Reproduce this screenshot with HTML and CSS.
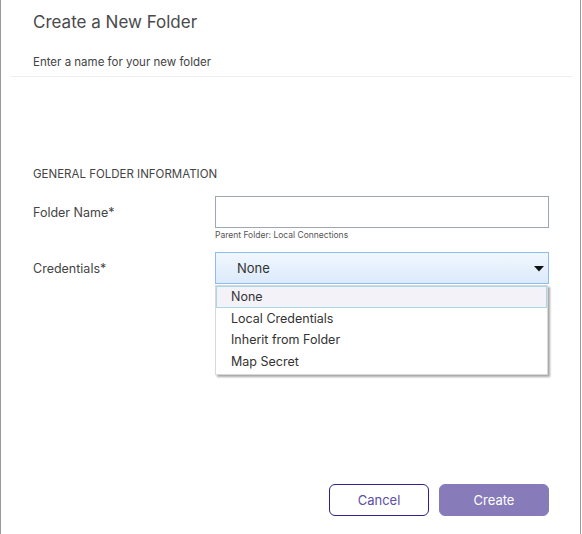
FILE: index.html
```html
<!DOCTYPE html>
<html>
<head>
<meta charset="utf-8">
<link rel="stylesheet" href="styles.css">
</head>
<body>
<div class="dialog">
  <div class="header">
    <h1 class="title">Create a New Folder</h1>
    <p class="subtitle">Enter a name for your new folder</p>
  </div>
  <div class="divider"></div>
  <div class="body">
    <h2 class="section">GENERAL FOLDER INFORMATION</h2>
    <div class="row">
      <label class="label">Folder Name*</label>
      <div class="field">
        <div class="input"></div>
        <div class="hint">Parent Folder: Local Connections</div>
      </div>
    </div>
    <div class="row row-cred">
      <label class="label">Credentials*</label>
      <div class="field">
        <div class="select">
          <span class="select-value">None</span>
          <svg class="caret" width="10" height="6" viewBox="0 0 10 6"><path d="M0 0 L10 0 L5 5.5 Z" fill="#111"/></svg>
        </div>
        <ul class="menu">
          <li class="item active">None</li>
          <li class="item">Local Credentials</li>
          <li class="item">Inherit from Folder</li>
          <li class="item">Map Secret</li>
        </ul>
      </div>
    </div>
  </div>
  <div class="footer">
    <button class="btn btn-cancel">Cancel</button>
    <button class="btn btn-create">Create</button>
  </div>
</div>
</body>
</html>
```
FILE: styles.css
```css
* { box-sizing: border-box; }
html, body { margin: 0; padding: 0; background: #fff; }
body {
  font-family: "Inter", "Lato", "Liberation Sans", sans-serif;
  color: #444;
}
.dialog {
  width: 581px;
  height: 534px;
  border-left: 1px solid #9a9a9a;
  border-right: 1px solid #9a9a9a;
  display: flex;
  flex-direction: column;
  background: #fff;
}
.header { padding: 10px 0 0 32px; }
.title {
  margin: 0;
  font-size: 17px;
  line-height: 24px;
  font-weight: 400;
  color: #4a4a4a;
}
.subtitle {
  margin: 20px 0 0 0;
  font-size: 11.5px;
  line-height: 16px;
  color: #444;
}
.divider {
  height: 1px;
  background: #eeeeee;
  margin: 6px 8px 0 10px;
}
.body { padding: 0 30px 0 32px; }
.section {
  margin: 90px 0 0 0;
  font-size: 11.5px;
  line-height: 14px;
  font-weight: 400;
  color: #444;
}
.row {
  display: grid;
  grid-template-columns: 182px 334px;
  align-items: start;
  margin-top: 15px;
}
.row-cred { margin-top: 11px; }
.label {
  font-size: 12.5px;
  line-height: 18px;
  color: #444;
  padding-top: 8px;
}
.field { position: relative; }
.input {
  height: 32px;
  border: 1px solid #9ea7b3;
  background: #fff;
}
.hint {
  font-size: 8.5px;
  line-height: 12px;
  margin-top: 1px;
  color: #555;
}
.select {
  height: 32px;
  border: 1px solid #8dbdf0;
  background: linear-gradient(#f1f7fe, #dbeafb);
  display: flex;
  align-items: center;
  justify-content: space-between;
  padding: 0 4px 0 21px;
}
.select-value { font-size: 13px; color: #333; }
.caret { margin-top: 1px; }
.menu {
  position: absolute;
  left: 0;
  top: 33px;
  width: 333px;
  margin: 0;
  padding: 0 0 2px 0;
  list-style: none;
  background: #fff;
  border: 1px solid #d8d8d8;
  box-shadow: 2px 2px 2px rgba(0,0,0,0.35);
}
.item {
  font-size: 12.5px;
  line-height: 21.5px;
  padding-left: 14px;
  color: #333;
  border: 1px solid transparent;
  height: 21.5px;
  display: flex;
  align-items: center;
}
.item.active {
  background: #f3f2f9;
  border-color: #a9d7e4;
}
.footer {
  margin-top: auto;
  display: flex;
  justify-content: flex-end;
  gap: 10px;
  padding: 0 31px 18px 0;
}
.btn {
  height: 32px;
  border-radius: 6px;
  font-family: "Inter", "Lato", "Liberation Sans", sans-serif;
  font-size: 13px;
  cursor: pointer;
}
.btn-cancel {
  width: 100px;
  background: #fff;
  border: 1px solid #2f1f8f;
  color: #5b4fa3;
}
.btn-create {
  width: 110px;
  background: #877bba;
  border: 1px solid #877bba;
  color: #fff;
}
```
